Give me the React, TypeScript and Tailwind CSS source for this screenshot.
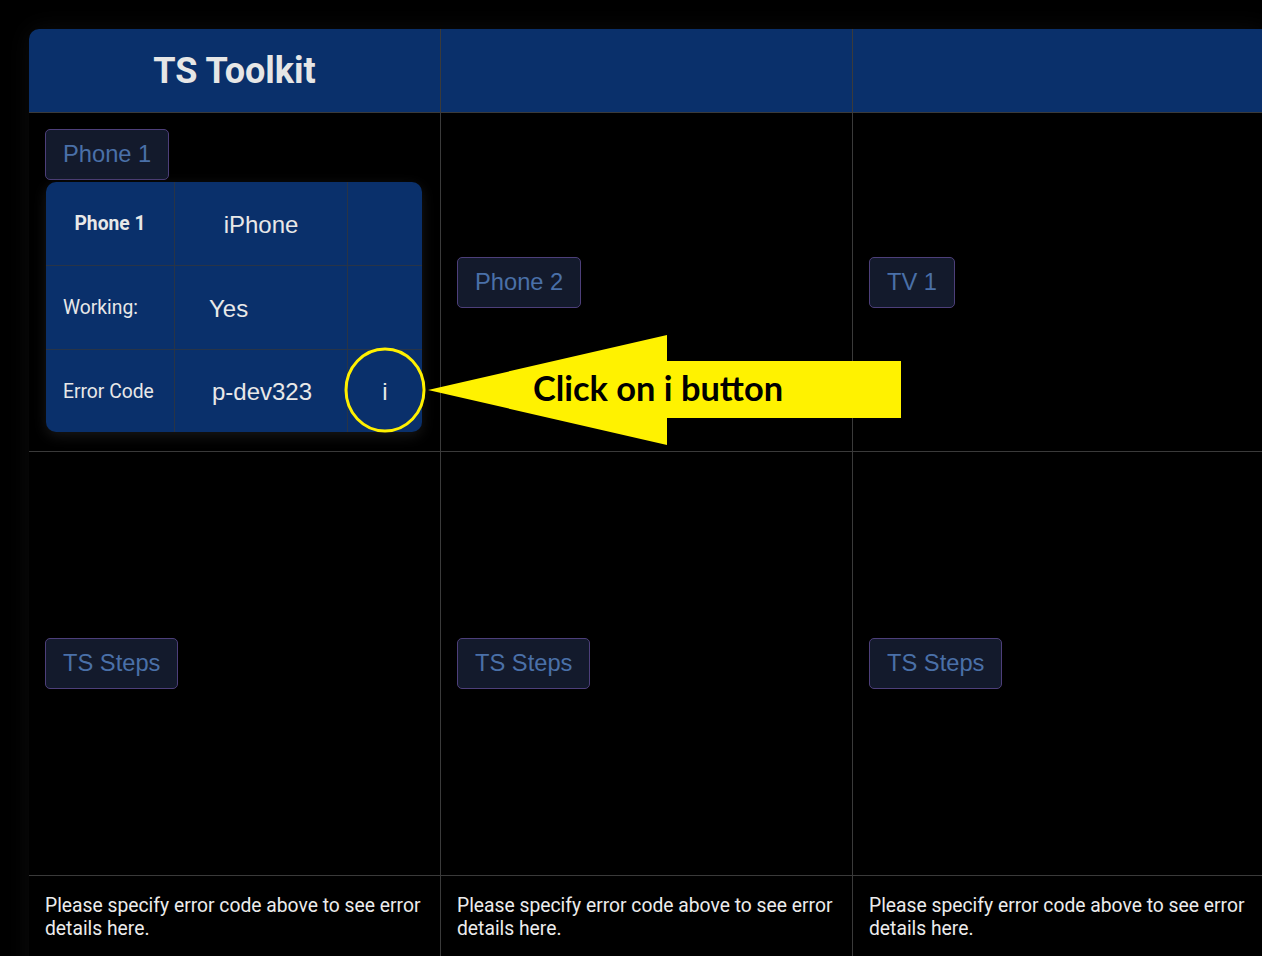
import React from "react";

const line = "border-[#3a3a3a]";

function DeviceButton({ label }: { label: string }) {
    return (
        <button className="h-[51px] self-start rounded-[5px] border border-[#4d3f7a] bg-[#131a2c] px-[17px] pt-[1px] text-[23.7px] leading-none text-[#4a70a8] [font-family:'Liberation_Sans',Arial,sans-serif]">
            {label}
        </button>
    );
}

function PhoneCard() {
    const cell = "flex items-center border-[#283447]";
    return (
        <div className="ml-[1px] mt-[2px] grid w-[376px] grid-cols-[129px_173px_74px] grid-rows-[84px_84px_82px] overflow-hidden rounded-[10px] bg-[#0a306b] text-[#e8e8e8] shadow-[0_4px_14px_rgba(40,40,40,0.6)]">
            <div className={`${cell} justify-center border-r border-b pt-[2px] text-[19.3px] font-bold [font-family:Roboto,sans-serif]`}>Phone 1</div>
            <div className={`${cell} justify-center border-r border-b pt-[2px] text-[24px] [font-family:'Liberation_Sans',Arial,sans-serif]`}>iPhone</div>
            <div className={`${cell} border-b`} />

            <div className={`${cell} border-r border-b pl-[17px] pt-[2px] text-[19.3px] [font-family:Roboto,sans-serif]`}>Working:</div>
            <div className={`${cell} border-r border-b pl-[34px] pt-[2px] text-[24px] [font-family:'Liberation_Sans',Arial,sans-serif]`}>Yes</div>
            <div className={`${cell} border-b`} />

            <div className={`${cell} border-r pl-[17px] pt-[2px] text-[19.3px] [font-family:Roboto,sans-serif]`}>Error Code</div>
            <div className={`${cell} justify-center border-r pl-[2px] pt-[2px] text-[24px] [font-family:'Liberation_Sans',Arial,sans-serif]`}>p-dev323</div>
            <div className={`${cell} justify-center pt-[2px] text-[24px] [font-family:'Liberation_Sans',Arial,sans-serif]`}>i</div>
        </div>
    );
}

export default function App() {
    const note = "Please specify error code above to see error details here.";

    return (
        <div className="relative h-screen w-full overflow-hidden bg-black pl-[29px] pt-[29px]">
            <div className="grid w-[1236px] grid-cols-[412px_412px_412px] grid-rows-[84px_339px_424px_120px] rounded-tl-[10px] bg-black shadow-[0_0_26px_rgba(255,255,255,0.05)]">
                {/* Header */}
                <div className={`flex items-center justify-center rounded-tl-[10px] border-r border-b ${line} bg-[#0a306b]`}>
                    <h1 className="text-[36px] font-bold text-[#e6e6e6] [font-family:Roboto,sans-serif]">TS Toolkit</h1>
                </div>
                <div className={`border-r border-b ${line} bg-[#0a306b]`} />
                <div className={`border-r border-b ${line} bg-[#0a306b]`} />

                {/* Devices */}
                <div className={`flex flex-col justify-center border-r border-b ${line} pb-[3px] pl-4`}>
                    <DeviceButton label="Phone 1" />
                    <PhoneCard />
                </div>
                <div className={`flex flex-col justify-center border-r border-b ${line} pl-4`}>
                    <DeviceButton label="Phone 2" />
                </div>
                <div className={`flex flex-col justify-center border-r border-b ${line} pl-4`}>
                    <DeviceButton label="TV 1" />
                </div>

                {/* Steps */}
                {[0, 1, 2].map((i) => (
                    <div key={i} className={`flex flex-col justify-center border-r border-b ${line} pl-4`}>
                        <DeviceButton label="TS Steps" />
                    </div>
                ))}

                {/* Error details */}
                {[0, 1, 2].map((i) => (
                    <div key={i} className={`border-r ${line} pl-4 pr-3 pt-[18px] text-[19.3px] leading-[23px] text-[#ececec] [font-family:Roboto,sans-serif]`}>
                        {note}
                    </div>
                ))}
            </div>

            {/* Annotation overlay */}
            <svg className="pointer-events-none absolute left-0 top-0" width="1262" height="956" viewBox="0 0 1262 956">
                <ellipse cx="385" cy="390" rx="39" ry="41" fill="none" stroke="#fff000" strokeWidth="3" />
                <polygon points="428,390 667,335 667,361 901,361 901,418 667,418 667,445" fill="#fff200" />
            </svg>
            <div className="pointer-events-none absolute left-[533px] top-[366px] text-[34.4px] font-bold leading-[44px] text-black [font-family:Lato,sans-serif]">
                Click on i button
            </div>
        </div>
    );
}
